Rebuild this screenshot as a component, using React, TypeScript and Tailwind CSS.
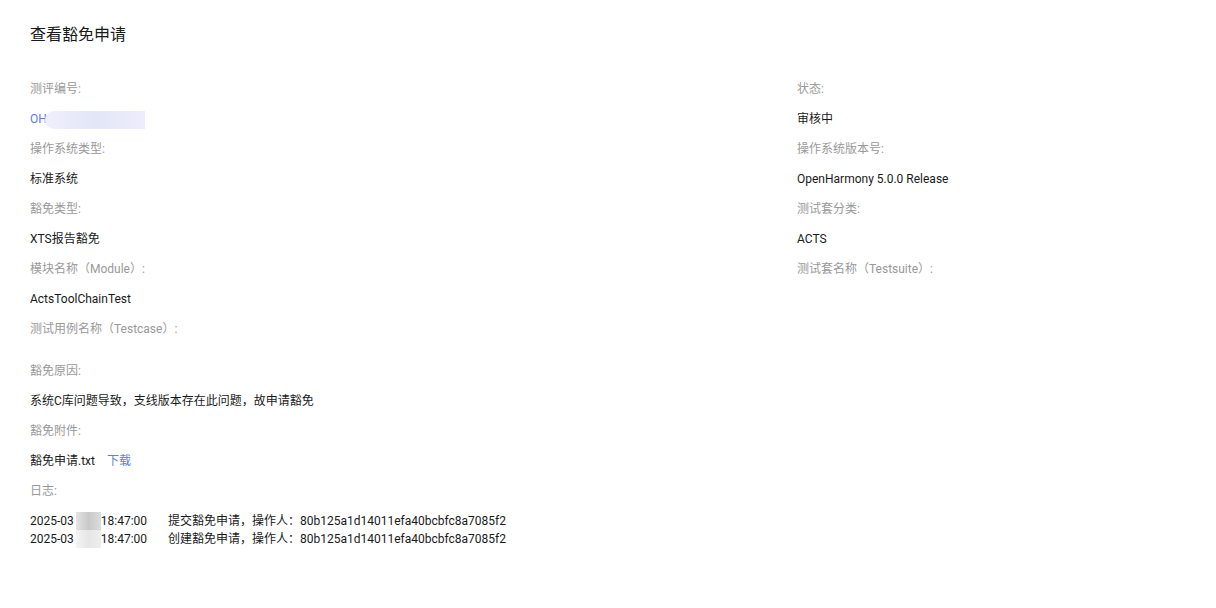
import React from "react";

const font = { fontFamily: 'Roboto, "Noto Sans CJK SC", sans-serif' };

function Label({ children }: { children: React.ReactNode }) {
  return <div className="leading-[30px] h-[30px] text-[12px] text-[#999999]">{children}</div>;
}
function Value({ children }: { children?: React.ReactNode }) {
  return <div className="leading-[30px] h-[30px] text-[12px] text-[#1a1a1a]">{children}</div>;
}

function Blur({ className }: { className: string }) {
  return <span className={"inline-block align-middle " + className} />;
}

export default function App() {
  return (
    <div className="w-[1216px] h-[608px] bg-white px-[30px] pt-[23px]" style={font}>
      <div className="text-[16px] leading-[24px] text-[#1a1a1a]">查看豁免申请</div>
      <div className="mt-[27px] flex">
        <div className="w-[767px]">
          <Label>测评编号:</Label>
          <Value>
            <span className="text-[#5b7cf2]">OH</span>
            <Blur className="w-[100px] h-[18px] -ml-[2px] rounded-l-[9px] bg-gradient-to-r from-[#eef0fb] via-[#e3e6f8] to-[#eceefb]" />
          </Value>
          <Label>操作系统类型:</Label>
          <Value>标准系统</Value>
          <Label>豁免类型:</Label>
          <Value>XTS报告豁免</Value>
          <Label>模块名称（Module）:</Label>
          <Value>ActsToolChainTest</Value>
          <Label>测试用例名称（Testcase）:</Label>
        </div>
        <div className="flex-1">
          <Label>状态:</Label>
          <Value>审核中</Value>
          <Label>操作系统版本号:</Label>
          <Value>OpenHarmony 5.0.0 Release</Value>
          <Label>测试套分类:</Label>
          <Value>ACTS</Value>
          <Label>测试套名称（Testsuite）:</Label>
        </div>
      </div>
      <div className="mt-[12px]">
        <Label>豁免原因:</Label>
        <Value>系统C库问题导致，支线版本存在此问题，故申请豁免</Value>
        <Label>豁免附件:</Label>
        <Value>
          豁免申请.txt<span className="ml-[12px] text-[#5b7cf2]">下载</span>
        </Value>
        <Label>日志:</Label>
        <div className="mt-[6px] text-[12px] leading-[18px] text-[#1a1a1a]">
          <div className="flex items-center">
            <span className="w-[138px] flex items-center">
              2025-03<Blur className="ml-[2px] w-[25px] h-[18px] bg-gradient-to-r from-[#e4e4e4] via-[#c9c9c9] to-[#dcdcdc]" />18:47:00
            </span>
            <span>提交豁免申请，操作人：80b125a1d14011efa40bcbfc8a7085f2</span>
          </div>
          <div className="flex items-center">
            <span className="w-[138px] flex items-center">
              2025-03<Blur className="ml-[2px] w-[25px] h-[18px] bg-gradient-to-r from-[#f4f4f4] via-[#e6e6e6] to-[#eeeeee]" />18:47:00
            </span>
            <span>创建豁免申请，操作人：80b125a1d14011efa40bcbfc8a7085f2</span>
          </div>
        </div>
      </div>
    </div>
  );
}
